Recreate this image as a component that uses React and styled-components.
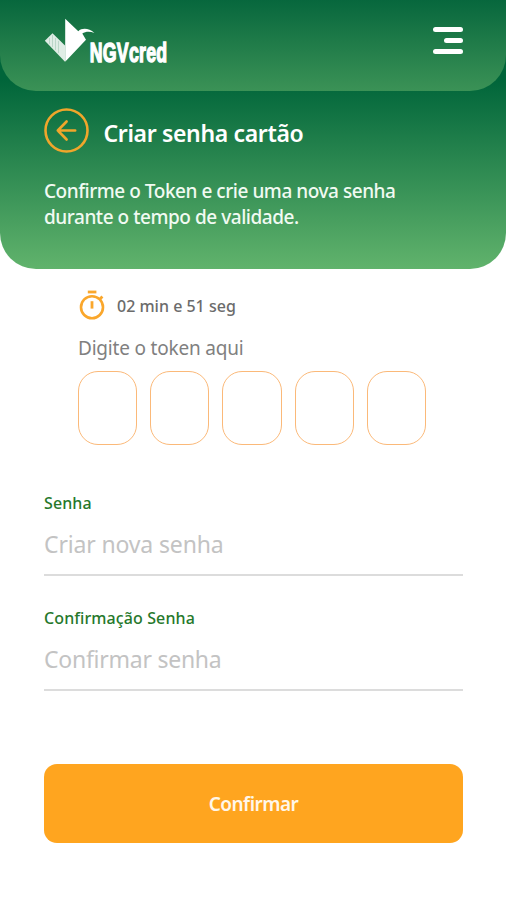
import { useState } from "react";
import styled, { createGlobalStyle } from "styled-components";

const GlobalStyle = createGlobalStyle`
  *{
    box-sizing: border-box;
  }
  body{
    margin: 0;
    background-color: #fff;
    font-family: "Noto Sans", "Open Sans", sans-serif;
  }
`

const Logo = () => (
  <svg width="140" height="60" viewBox="44 17 140 60" fill="#fff" overflow="visible">
    <path d="M44.8 40.8 52.5 33.2 65 45.4V61.8Z" opacity="0.86" />
    <path d="M49.5 38v6M52.5 35v12M55.5 38v12M58.5 41v12" stroke="#1c7846" strokeWidth="0.6" opacity="0.3" />
    <path d="M65.2 18.8 78.3 31.2C82 27.6 89 28 94.4 32.9 90 31.2 85.5 31.4 82.3 33.4L86 39.8 65.2 61.8Z" />
    <text
      transform="translate(89.8 61.8) scale(0.622 1)"
      fontFamily="Liberation Sans, sans-serif"
      fontWeight="700"
      fontSize="28.5"
      letterSpacing="0.4"
      stroke="#fff"
      strokeWidth="1.5"
    >
      NGVcred
    </text>
  </svg>
)

const BackIcon = () => (
  <svg width="46" height="46" viewBox="0 0 46 46" fill="none" stroke="#f0a62b" strokeLinecap="round" strokeLinejoin="round">
    <circle cx="22.5" cy="22.5" r="21" strokeWidth="2.6" />
    <path d="M31.2 22.5H13.8M22.6 13.5 13.8 22.5 22.6 31.5" strokeWidth="2.6" />
  </svg>
)

const StopwatchIcon = () => (
  <svg width="26" height="30" viewBox="0 0 26 30" fill="none" stroke="#faa72c">
    <circle cx="13" cy="17.2" r="11" strokeWidth="2.6" />
    <path d="M8.8 2h8.6" strokeWidth="2.8" />
    <path d="M13 11.2v7.4" strokeWidth="2.8" />
    <path d="M20.6 9.4 23.4 6.6" strokeWidth="2.8" />
  </svg>
)

const Field = ({ label, placeholder, spacing, value, onChange }) => {
  return (
    <FieldBlock>
      <FieldLabel>{label}</FieldLabel>
      <FieldInput type="password" placeholder={placeholder} $spacing={spacing} value={value} onChange={onChange} />
    </FieldBlock>
  );
};

const App = () => {
  const [token, setToken] = useState(["", "", "", "", ""]);
  const [password, setPassword] = useState("");
  const [confirmation, setConfirmation] = useState("");

  const updateToken = (index, digit) => {
    const newToken = [...token];
    newToken[index] = digit;
    setToken(newToken);
  }

  return (
    <Page>
      <GlobalStyle />
      <Hero>
        <TopBar>
          <Logo />
          <MenuButton aria-label="Menu">
            <MenuLine $width="30px" />
            <MenuLine $width="19px" />
            <MenuLine $width="30px" />
          </MenuButton>
        </TopBar>
        <TitleRow>
          <BackIcon />
          <Title>Criar senha cartão</Title>
        </TitleRow>
        <Description>
          <DescriptionLine>Confirme o Token e crie uma nova senha</DescriptionLine>
          <DescriptionLine>durante o tempo de validade.</DescriptionLine>
        </Description>
      </Hero>
      <TokenBlock>
        <Timer>
          <StopwatchIcon />
          <TimerText>02 min e 51 seg</TimerText>
        </Timer>
        <TokenLabel>Digite o token aqui</TokenLabel>
        <TokenRow>
          {token.map((digit, index) => (
            <TokenInput
              key={index}
              maxLength={1}
              value={digit}
              onChange={(e) => updateToken(index, e.target.value)} />
          ))}
        </TokenRow>
      </TokenBlock>
      <Form>
        <Field
          label="Senha"
          placeholder="Criar nova senha"
          spacing="-0.15px"
          value={password}
          onChange={(e) => setPassword(e.target.value)} />
        <Field
          label="Confirmação Senha"
          placeholder="Confirmar senha"
          spacing="-0.25px"
          value={confirmation}
          onChange={(e) => setConfirmation(e.target.value)} />
        <ConfirmButton>Confirmar</ConfirmButton>
      </Form>
    </Page>
  );
};

export default App;

const Page = styled.div`
  width: 100%;
  height: 900px;
  overflow: hidden;
  background-color: #fff;
`;

const Hero = styled.header`
  height: 269px;
  border-radius: 0 0 36px 36px;
  background: linear-gradient(#00653a 80px, #61b36c 269px);
`;

const TopBar = styled.div`
  height: 91px;
  padding: 17px 43px 0 44px;
  display: flex;
  justify-content: space-between;
  align-items: flex-start;
  border-radius: 0 0 36px 36px;
  background: linear-gradient(#07673d, #3b9256);
`;

const MenuButton = styled.button`
  display: flex;
  flex-direction: column;
  align-items: flex-end;
  gap: 6px;
  margin-top: 10px;
  padding: 0;
  border: none;
  background: none;
  &:hover{
    cursor: pointer;
  }
`;

const MenuLine = styled.span`
  width: ${(props) => props.$width};
  height: 5px;
  border-radius: 2.5px;
  background-color: #fff;
`;

const TitleRow = styled.div`
  display: flex;
  align-items: center;
  gap: 13.5px;
  padding: 17px 43px 0 44px;
`;

const Title = styled.h1`
  margin: 4px 0 0;
  font-size: 23px;
  line-height: 30px;
  font-weight: 600;
  letter-spacing: -0.35px;
  color: #fff;
`;

const Description = styled.p`
  margin: 0;
  padding: 24px 44px 0;
  font-size: 19px;
  line-height: 26px;
  font-weight: 500;
  color: #f1faf2;
`;

const DescriptionLine = styled.span`
  display: block;
  white-space: nowrap;
  letter-spacing: -0.46px;
`;

const TokenBlock = styled.section`
  padding: 21px 78px 0;
`;

const Timer = styled.div`
  display: flex;
  align-items: center;
  gap: 12px;
  margin-left: 1px;
`;

const TimerText = styled.span`
  margin-top: 1px;
  font-size: 16px;
  line-height: 22px;
  font-weight: 500;
  color: #6b6b6b;
`;

const TokenLabel = styled.p`
  margin: 15px 0 0;
  font-size: 19px;
  line-height: 26px;
  letter-spacing: -0.2px;
  color: #808080;
`;

const TokenRow = styled.div`
  display: flex;
  gap: 13px;
  margin-top: 10px;
`;

const TokenInput = styled.input`
  width: 59.2px;
  height: 74px;
  flex-shrink: 0;
  padding: 0;
  border: 1.5px solid #fbb979;
  border-radius: 20px;
  outline: none;
  background-color: #fff;
  text-align: center;
  font-size: 24px;
  color: #6b6b6b;
`;

const Form = styled.form`
  display: flex;
  flex-direction: column;
  padding: 45px 43px 0 44px;
`;

const FieldBlock = styled.label`
  display: flex;
  flex-direction: column;
  height: 86px;
  margin-bottom: 29px;
`;

const FieldLabel = styled.span`
  padding-top: 1px;
  font-size: 16px;
  line-height: 24px;
  font-weight: 500;
  letter-spacing: 0.1px;
  color: #26782b;
`;

const FieldInput = styled.input`
  height: 61px;
  padding: 0 0 2px;
  border: none;
  border-bottom: 2px solid #dcdcdc;
  outline: none;
  background: none;
  font-family: inherit;
  font-size: 23px;
  letter-spacing: ${(props) => props.$spacing};
  color: #6b6b6b;
  &::placeholder{
    color: #c3c3c3;
    opacity: 1;
  }
`;

const ConfirmButton = styled.button`
  height: 79px;
  margin-top: 44px;
  border: none;
  border-radius: 13px;
  background-color: #ffa51f;
  font-family: inherit;
  font-size: 19px;
  font-weight: 600;
  letter-spacing: -0.5px;
  color: #fff7ea;
  &:hover{
    cursor: pointer;
  }
`;
